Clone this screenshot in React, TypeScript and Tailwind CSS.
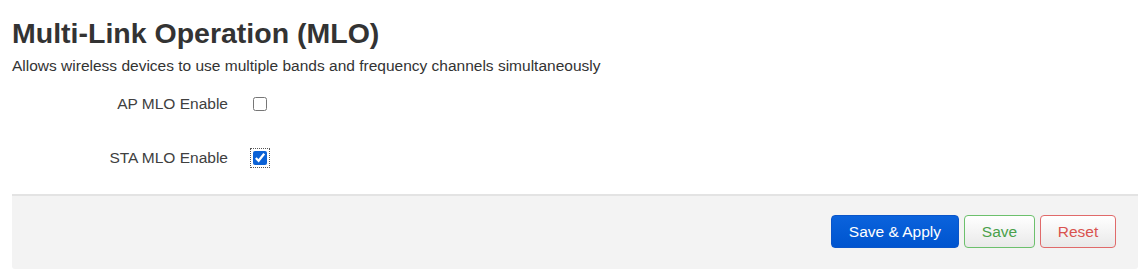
import React from "react";

const font = { fontFamily: '"Liberation Sans", Arial, sans-serif' };

function OptionRow({ label, checked }: { label: string; checked?: boolean }) {
  return (
    <div className="flex items-center h-[54px]">
      <label className="w-[216px] text-right text-[15.5px] text-[#404040]">{label}</label>
      <div className="pl-[25px] flex items-center">
        <input
          type="checkbox"
          defaultChecked={checked}
          className={
            "w-[14px] h-[14px] m-0 accent-[#0b62d6] " +
            (checked ? "outline outline-1 outline-dotted outline-[#555] outline-offset-2" : "")
          }
        />
      </div>
    </div>
  );
}

export default function App() {
  return (
    <div className="bg-white w-[1143px] h-[279px] px-3 pt-[17px]" style={font}>
      <h2 className="text-[28.5px] leading-[32px] font-bold text-[#333]">Multi-Link Operation (MLO)</h2>
      <p className="text-[15.5px] leading-[20px] text-[#333] mt-[7px]">
        Allows wireless devices to use multiple bands and frequency channels simultaneously
      </p>

      <div className="mt-[1px]">
        <OptionRow label="AP MLO Enable" />
        <OptionRow label="STA MLO Enable" checked />
      </div>

      <div className="mt-[9px] mr-[-7px] h-[75px] bg-[#f3f3f3] border-t-2 border-[#e3e3e3] rounded-b-[3px] flex items-center justify-end pr-[22px] gap-[5px]">
        <button className="h-[33px] px-[17px] -mt-[2px] rounded-[4px] text-[15.5px] text-white bg-gradient-to-b from-[#0b63dc] to-[#0054cf] border border-[#0a55c9]">
          Save &amp; Apply
        </button>
        <button className="h-[33px] w-[71px] -mt-[2px] rounded-[4px] text-[15.5px] text-[#4aa04a] bg-gradient-to-b from-white to-[#e9e9e9] border border-[#6cc06c]">
          Save
        </button>
        <button className="h-[33px] w-[76px] -mt-[2px] rounded-[4px] text-[15.5px] text-[#d9534f] bg-gradient-to-b from-white to-[#e9e9e9] border border-[#e06a6a]">
          Reset
        </button>
      </div>
    </div>
  );
}
